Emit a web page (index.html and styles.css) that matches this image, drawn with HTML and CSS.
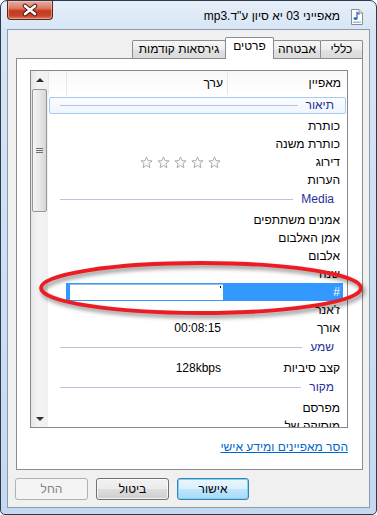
FILE: index.html
```html
<!DOCTYPE html>
<html lang="he" dir="rtl">
<head>
    <meta charset="UTF-8">
    <meta name="viewport" content="width=device-width, initial-scale=1.0">
    <title>מאפייני 03 יא סיון ע"ד.mp3</title>
    <link rel="stylesheet" href="styles.css">
</head>
<body>

    <div class="window">
        <div class="titlebar">
            <span class="file-icon">
                <svg width="16" height="16" viewBox="0 0 16 16">
                    <path d="M2.5 0.5 H10 L13.5 4 V15.5 H2.5 Z" fill="#fff" stroke="#8c8c8c"/>
                    <path d="M10 0.5 V4 H13.5" fill="#e8e8e8" stroke="#8c8c8c"/>
                    <ellipse cx="6.5" cy="9.5" rx="2" ry="1.6" fill="#2f6fc9"/>
                    <path d="M8 9.5 V3.5 L10.5 5.5" fill="none" stroke="#2f6fc9" stroke-width="1.3"/>
                    <rect x="4" y="12.5" width="8" height="1.5" fill="#9fb7d9"/>
                </svg>
            </span>
            <span class="title">מאפייני 03 יא סיון ע"ד.mp3</span>
            <span class="close-btn">
                <svg width="44" height="18" viewBox="0 0 44 18">
                    <path d="M17 5 L27 13 M27 5 L17 13" stroke="#4a1a12" stroke-width="4.6" stroke-linecap="round"/>
                    <path d="M17 5 L27 13 M27 5 L17 13" stroke="#fff" stroke-width="2.6" stroke-linecap="round"/>
                </svg>
            </span>
        </div>

        <div class="client">
            <div class="tabs">
                <div class="tab tab-general">כללי</div>
                <div class="tab tab-security">אבטחה</div>
                <div class="tab tab-details selected">פרטים</div>
                <div class="tab tab-versions">גירסאות קודמות</div>
            </div>

            <div class="panel">
                <div class="listview">
                    <div class="list-main">
                        <div class="list-header">
                            <div class="col-prop">מאפיין</div>
                            <div class="col-val">ערך</div>
                            <div class="col-rest"></div>
                        </div>

                        <div class="list-body">
                            <div class="group focused">
                                <div class="group-inner"><span class="group-name">תיאור</span><span class="group-line"></span></div>
                            </div>
                            <div class="row"><div class="prop">כותרת</div><div class="val"></div></div>
                            <div class="row"><div class="prop">כותרת משנה</div><div class="val"></div></div>
                            <div class="row">
                                <div class="prop">דירוג</div>
                                <div class="val stars">
                                    <svg class="star" viewBox="0 0 14 14"><path d="M7 1 L8.7 5 L13 5.3 L9.7 8.1 L10.7 12.5 L7 10.2 L3.3 12.5 L4.3 8.1 L1 5.3 L5.3 5 Z"/></svg>
                                    <svg class="star" viewBox="0 0 14 14"><path d="M7 1 L8.7 5 L13 5.3 L9.7 8.1 L10.7 12.5 L7 10.2 L3.3 12.5 L4.3 8.1 L1 5.3 L5.3 5 Z"/></svg>
                                    <svg class="star" viewBox="0 0 14 14"><path d="M7 1 L8.7 5 L13 5.3 L9.7 8.1 L10.7 12.5 L7 10.2 L3.3 12.5 L4.3 8.1 L1 5.3 L5.3 5 Z"/></svg>
                                    <svg class="star" viewBox="0 0 14 14"><path d="M7 1 L8.7 5 L13 5.3 L9.7 8.1 L10.7 12.5 L7 10.2 L3.3 12.5 L4.3 8.1 L1 5.3 L5.3 5 Z"/></svg>
                                    <svg class="star" viewBox="0 0 14 14"><path d="M7 1 L8.7 5 L13 5.3 L9.7 8.1 L10.7 12.5 L7 10.2 L3.3 12.5 L4.3 8.1 L1 5.3 L5.3 5 Z"/></svg>
                                </div>
                            </div>
                            <div class="row"><div class="prop">הערות</div><div class="val"></div></div>

                            <div class="group">
                                <div class="group-inner"><span class="group-name">Media</span><span class="group-line"></span></div>
                            </div>
                            <div class="row"><div class="prop">אמנים משתתפים</div><div class="val"></div></div>
                            <div class="row"><div class="prop">אמן האלבום</div><div class="val"></div></div>
                            <div class="row"><div class="prop">אלבום</div><div class="val"></div></div>
                            <div class="row"><div class="prop">שנה</div><div class="val"></div></div>
                            <div class="row selected">
                                <div class="prop">#</div>
                                <div class="val"><span class="edit-box"><span class="caret"></span></span></div>
                            </div>
                            <div class="row"><div class="prop">ז'אנר</div><div class="val"></div></div>
                            <div class="row"><div class="prop">אורך</div><div class="val">00:08:15</div></div>

                            <div class="group">
                                <div class="group-inner"><span class="group-name">שמע</span><span class="group-line"></span></div>
                            </div>
                            <div class="row"><div class="prop">קצב סיביות</div><div class="val">128kbps</div></div>

                            <div class="group">
                                <div class="group-inner"><span class="group-name">מקור</span><span class="group-line"></span></div>
                            </div>
                            <div class="row"><div class="prop">מפרסם</div><div class="val"></div></div>
                            <div class="row"><div class="prop">מוסיקה של</div><div class="val"></div></div>
                        </div>
                    </div>

                    <div class="scrollbar">
                        <div class="sb-button"><span class="arrow-up"></span></div>
                        <div class="sb-thumb"><span class="grip"></span></div>
                        <div class="sb-track"></div>
                        <div class="sb-button"><span class="arrow-down"></span></div>
                    </div>
                </div>

                <div class="link-row">
                    <a href="#" class="remove-link">הסר מאפיינים ומידע אישי</a>
                </div>
            </div>

            <div class="buttons">
                <button class="btn default">אישור</button>
                <button class="btn">ביטול</button>
                <button class="btn" disabled>החל</button>
            </div>
        </div>

        <svg class="annotation" width="377" height="515" viewBox="0 0 377 515">
            <ellipse cx="201" cy="288" rx="160" ry="25" fill="none" stroke="#ec1c24" stroke-width="3.8"/>
        </svg>
    </div>

</body>
</html>
```

FILE: styles.css
```css
html, body {
    margin: 0;
    padding: 0;
}

body {
    font-family: "Liberation Sans", "DejaVu Sans", Arial, sans-serif;
    font-size: 12px;
    color: #000;
    background-color: #fff;
}

.window {
    position: relative;
    width: 377px;
    height: 515px;
    box-sizing: border-box;
    border: 1px solid #2b3a4d;
    border-radius: 7px 7px 5px 5px;
    background: linear-gradient(to bottom, #e6eff9 0, #d6e5f5 30px, #c4d9f0 100%);
    display: flex;
    flex-direction: column;
    overflow: hidden;
}

/* כותרת החלון */
.titlebar {
    height: 28px;
    flex: none;
    display: flex;
    align-items: flex-start;
    padding: 0 11px 0 6px;
}

.file-icon {
    margin-top: 8px;
    width: 16px;
    height: 16px;
}

.title {
    flex: 1;
    margin: 8px 9px 0 0;
    line-height: 15px;
    white-space: nowrap;
}

.close-btn {
    width: 44px;
    height: 18px;
    border: 1px solid #5a2519;
    border-top: none;
    border-radius: 0 0 4px 4px;
    background: linear-gradient(to bottom, #eaab9f 0, #db7b64 40%, #c4391e 55%, #c74329 80%, #d9775e 100%);
    box-shadow: inset 0 0 0 1px rgba(255, 220, 210, 0.45);
}

.close-btn svg {
    display: block;
}

/* אזור התוכן */
.client {
    flex: 1;
    margin: 0 6px 6px;
    border: 1px solid #8b9bb0;
    background-color: #f0f0f0;
    display: flex;
    flex-direction: column;
    padding: 7px 6px 7px 8px;
}

.tabs {
    position: relative;
    z-index: 2;
    height: 21px;
    display: flex;
    align-items: flex-end;
}

.tab {
    box-sizing: border-box;
    height: 18px;
    border: 1px solid #898c95;
    border-bottom: none;
    background: linear-gradient(to bottom, #f6f6f6 0, #ececec 50%, #e1e1e1 51%, #dadada 100%);
    text-align: center;
    line-height: 17px;
    border-radius: 2px 2px 0 0;
}

.tab + .tab {
    margin-right: -1px;
}

.tab-general { width: 43px; }
.tab-security { width: 48px; }
.tab-details { width: 49px; }
.tab-versions { width: 94px; }

.tab.selected {
    position: relative;
    height: 22px;
    margin-bottom: -1px;
    background: #fff;
    line-height: 17px;
    z-index: 3;
}

.panel {
    flex: 1;
    border: 1px solid #898c95;
    background-color: #fff;
    padding: 11px 14px 0 13px;
    display: flex;
    flex-direction: column;
}

/* רשימת המאפיינים */
.listview {
    height: 358px;
    box-sizing: border-box;
    border: 1px solid #828790;
    display: flex;
    overflow: hidden;
}

.list-main {
    flex: 1;
    overflow: hidden;
}

.list-header {
    height: 24px;
    display: flex;
    background: linear-gradient(to bottom, #f7f8f9 0, #fbfbfc 45%, #ffffff 100%);
}

.list-header div {
    box-sizing: border-box;
    line-height: 24px;
    border-left: 1px solid #e5e7ea;
}

.col-prop {
    width: 120px;
    padding-right: 6px;
}

.col-val {
    width: 161px;
    padding-right: 4px;
}

.col-rest {
    flex: 1;
}

.group {
    height: 22px;
    padding: 2px 1px 3px;
    box-sizing: border-box;
}

.group-inner {
    height: 17px;
    box-sizing: border-box;
    border: 1px solid transparent;
    border-radius: 2px;
    display: flex;
    align-items: center;
    padding: 0 11px 0 10px;
}

.group.focused .group-inner {
    border-color: #a6cbf0;
    background: linear-gradient(to bottom, #fafcff 0, #eef5fd 100%);
}

.group-name {
    color: #1e3296;
    line-height: 15px;
}

.group-line {
    flex: 1;
    height: 1px;
    margin-right: 8px;
    background-color: #b8c4dc;
}

.row {
    height: 18px;
    display: flex;
    line-height: 18px;
    white-space: nowrap;
}

.prop {
    width: 120px;
    box-sizing: border-box;
    padding-right: 7px;
}

.val {
    width: 161px;
    box-sizing: border-box;
    padding-right: 6px;
}

.stars {
    display: flex;
    align-items: center;
    gap: 4px;
    padding-right: 6px;
}

.star {
    width: 13px;
    height: 13px;
    fill: #fbfbfb;
    stroke: #a3a3a3;
    stroke-width: 1;
}

.row.selected .prop {
    width: 116px;
    margin-right: 4px;
    padding-right: 3px;
    background-color: #3399ff;
    color: #fff;
}

.row.selected .val {
    display: flex;
    padding: 1px 4px 1px 4px;
    background-color: #3399ff;
}

.edit-box {
    flex: 1;
    position: relative;
    background-color: #fff;
    border-top: 1px solid #9cbde0;
}

.caret {
    position: absolute;
    left: 150px;
    top: 1px;
    width: 1px;
    height: 2px;
    background-color: #000;
}

/* פס גלילה */
.scrollbar {
    width: 17px;
    flex: none;
    display: flex;
    flex-direction: column;
    background: linear-gradient(to right, #e6e6e6 0, #f3f3f3 40%, #f0f0f0 100%);
}

.sb-button {
    height: 17px;
    display: flex;
    align-items: center;
    justify-content: center;
}

.arrow-up {
    width: 0;
    height: 0;
    border-left: 4px solid transparent;
    border-right: 4px solid transparent;
    border-bottom: 4px solid #303030;
}

.arrow-down {
    width: 0;
    height: 0;
    border-left: 4px solid transparent;
    border-right: 4px solid transparent;
    border-top: 4px solid #303030;
}

.sb-thumb {
    height: 123px;
    margin: 1px 1px 0 1px;
    box-sizing: border-box;
    border: 1px solid #979797;
    border-radius: 2px;
    background: linear-gradient(to right, #f4f4f4 0, #e8e8e8 50%, #d6d6d6 100%);
    display: flex;
    align-items: center;
    justify-content: center;
}

.grip {
    width: 7px;
    height: 5px;
    background: repeating-linear-gradient(to bottom, #6f6f6f 0, #6f6f6f 1px, transparent 1px, transparent 2px);
}

.sb-track {
    flex: 1;
}

.link-row {
    margin-top: 12px;
    line-height: 15px;
}

.remove-link {
    color: #0066cc;
    text-decoration: underline;
}

/* כפתורים */
.buttons {
    margin-top: 8px;
    margin-left: -1px;
    display: flex;
    justify-content: flex-end;
    gap: 8px;
}

.btn {
    width: 73px;
    height: 22px;
    margin: 0;
    padding: 0;
    font-family: inherit;
    font-size: 12px;
    color: #000;
    border: 1px solid #707070;
    border-radius: 3px;
    background: linear-gradient(to bottom, #f2f2f2 0, #ebebeb 50%, #dddddd 51%, #cfcfcf 100%);
    box-shadow: inset 0 0 0 1px rgba(255, 255, 255, 0.7);
}

.btn.default {
    width: 72px;
    border-color: #3c7fb1;
    background: linear-gradient(to bottom, #eaf6fd 0, #d9f0fc 50%, #bee6fd 51%, #a7d9f5 100%);
    box-shadow: inset 0 0 0 1px #7fd3f8;
}

.btn:disabled {
    border-color: #adb2b5;
    background: #f4f4f4;
    color: #838383;
    box-shadow: none;
}

/* סימון אדום */
.annotation {
    position: absolute;
    left: -1px;
    top: -1px;
    pointer-events: none;
    filter: drop-shadow(2px 3px 2px rgba(0, 0, 0, 0.45));
    z-index: 10;
}
```
